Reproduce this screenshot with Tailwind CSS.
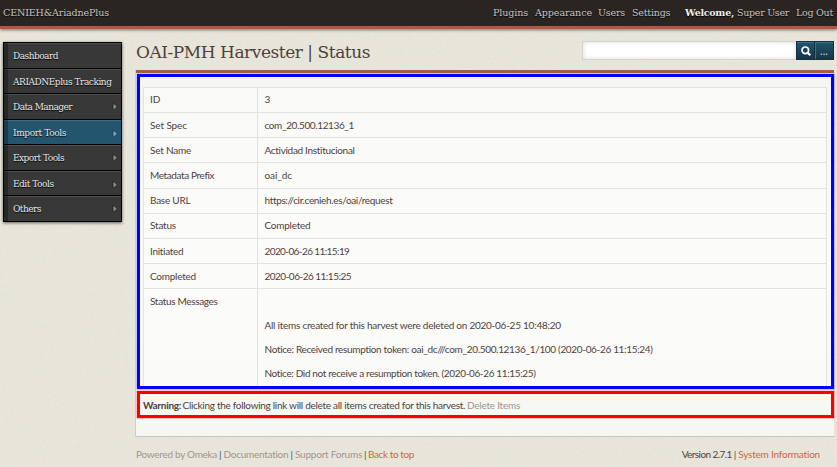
<!DOCTYPE html>
<html lang="en">
<head>
<meta charset="utf-8">
<title>OAI-PMH Harvester | Status</title>
<script src="https://cdn.jsdelivr.net/npm/@tailwindcss/browser@4"></script>
</head>
<body class="relative isolate w-[837px] h-[467px] overflow-hidden bg-[#e9e7db] font-['Lato',sans-serif] text-[10px] leading-[14px] text-[#4f3f3c] whitespace-nowrap">
<svg class="absolute inset-0 -z-10 opacity-[.07]" width="837" height="467"><filter id="paper"><feTurbulence type="fractalNoise" baseFrequency=".35" numOctaves="2"/><feColorMatrix type="saturate" values="0"/></filter><rect width="837" height="467" filter="url(#paper)"/></svg>

<header class="flex h-[29px] items-center justify-between border-b-3 border-[#a65e42] bg-[#2b2521] pl-[3px] font-['DejaVu_Serif',serif] text-[9.5px] text-[#c9c6c3] shadow-[0_1px_3px_rgba(0,0,0,.5)] [text-shadow:0_1px_1px_#000]">
  <a class="tracking-[-0.13px]">CENIEH&amp;AriadnePlus</a>
  <nav class="flex w-[344px]">
    <a class="w-[42px] tracking-[-0.1px]">Plugins</a><a class="w-[63px] tracking-[-0.06px]">Appearance</a><a class="w-[34px] tracking-[-0.18px]">Users</a><a class="w-[53px] tracking-[-0.2px]">Settings</a><b class="w-[52px] tracking-[-0.26px] text-[#f0eeec]">Welcome,</b><a class="w-[59px] tracking-[-0.29px]">Super User</a><a class="w-[37px] tracking-[-0.27px]">Log Out</a>
  </nav>
</header>

<div class="flex">
  <aside class="mt-[13px] ml-[3px] h-[180px] w-[119px] shrink-0 border border-b-0 border-black bg-[#383838] font-['DejaVu_Serif',serif] text-[9px] leading-[24px] text-[#e8e8e8] shadow-[0_1px_3px_rgba(0,0,0,.6)] [text-shadow:0_1px_1px_#000]">
    <a class="flex h-[26px] items-center border-b border-b-black bg-[#383838] pl-[9px] tracking-[-0.51px] shadow-[inset_4px_0_0_rgba(0,0,0,.3),inset_0_1px_0_#505050]">Dashboard</a>
    <a class="flex h-[25px] items-center border-b border-b-black bg-[#383838] pt-[2px] pl-[9px] tracking-[-0.45px] shadow-[inset_4px_0_0_rgba(0,0,0,.3),inset_0_1px_0_#505050]">ARIADNEplus Tracking</a>
    <a class="flex h-[26px] items-center justify-between border-b border-b-black bg-[#383838] pr-[4px] pl-[9px] tracking-[-0.55px] shadow-[inset_4px_0_0_rgba(0,0,0,.3),inset_0_1px_0_#505050]">Data Manager<svg width="5" height="7"><path d="M1 0v7" stroke="#222"/><path d="M1.5 1v5.5l3-2.75z" fill="#929292"/></svg></a>
    <a class="flex h-[25px] items-center justify-between border-b border-b-black bg-[#24556f] pt-[2px] pr-[4px] pl-[9px] tracking-[-0.39px] shadow-[inset_4px_0_0_rgba(0,0,0,.3),inset_0_1px_0_#3d6b83]">Import Tools<svg width="5" height="7"><path d="M1 0v7" stroke="#173b4e"/><path d="M1.5 1v5.5l3-2.75z" fill="#a0a8ac"/></svg></a>
    <a class="flex h-[26px] items-center justify-between border-b border-b-black bg-[#383838] pr-[4px] pl-[9px] tracking-[-0.52px] shadow-[inset_4px_0_0_rgba(0,0,0,.3),inset_0_1px_0_#505050]">Export Tools<svg width="5" height="7"><path d="M1 0v7" stroke="#222"/><path d="M1.5 1v5.5l3-2.75z" fill="#929292"/></svg></a>
    <a class="flex h-[25px] items-center justify-between border-b border-b-black bg-[#383838] pt-[2px] pr-[4px] pl-[9px] tracking-[-0.48px] shadow-[inset_4px_0_0_rgba(0,0,0,.3),inset_0_1px_0_#505050]">Edit Tools<svg width="5" height="7"><path d="M1 0v7" stroke="#222"/><path d="M1.5 1v5.5l3-2.75z" fill="#929292"/></svg></a>
    <a class="flex h-[26px] items-center justify-between border-b border-b-black bg-[#383838] pr-[4px] pl-[9px] tracking-[-0.51px] shadow-[inset_4px_0_0_rgba(0,0,0,.3),inset_0_1px_0_#505050]">Others<svg width="5" height="7"><path d="M1 0v7" stroke="#222"/><path d="M1.5 1v5.5l3-2.75z" fill="#929292"/></svg></a>
  </aside>

  <div class="ml-[14px] w-[698px]">
    <div class="flex h-[41px] items-start justify-between pt-[11px]">
      <h1 class="font-['DejaVu_Serif',serif] text-[17px] leading-6 tracking-[-0.46px]">OAI-PMH Harvester | Status</h1>
      <form class="mt-px flex h-[19px]">
        <div class="w-[214px] border border-r-0 border-[#d4d4cc] bg-white shadow-[inset_0_0_5px_rgba(0,0,0,.14)]"></div>
        <div class="flex w-[19px] items-center justify-center border border-[#14303f] bg-linear-to-b from-[#20546d] to-[#163648] shadow-[inset_0_1px_0_#3f6d84]"><svg class="mt-px" width="10" height="10" fill="none" stroke="#fff"><circle cx="4.3" cy="4.3" r="3.3" stroke-width="1.7"/><path d="M6.7 6.7 9.3 9.3" stroke-width="2"/></svg></div>
        <div class="flex w-[19px] items-center justify-center border border-l-0 border-[#14303f] bg-linear-to-b from-[#20546d] to-[#163648] text-[11px] text-[#c4d2d9] shadow-[inset_1px_1px_0_#3f6d84]">...</div>
      </form>
    </div>

    <main class="relative h-[367px] border-t-3 border-b border-t-[#a65e42] border-b-[#c6c6b8] bg-[#f6f7f2] bg-linear-to-b from-[#f5f6f1] via-[#fbfbf9] to-[#f6f7f2] px-[7px] pt-[14px] shadow-[-1px_0_0_#cfcec2]">
      <div class="grid h-[299px] grid-cols-[114px_1fr] grid-rows-[25px_25px_25px_26px_25px_25px_25px_25px_98px] border-t border-r border-l border-[#e2e3dd] bg-[#fcfcfa]/60 *:border-b *:border-[#e2e3dd] *:pt-[4px] *:odd:pl-[6px] *:even:pl-[6.5px] *:odd:border-r">
        <div>ID</div><div>3</div>
        <div class="tracking-[-0.1px]"><p class="mt-px">Set Spec</p></div><div class="tracking-[-0.38px]"><p class="mt-px">com_20.500.12136_1</p></div>
        <div class="tracking-[-0.22px]"><p class="mt-px">Set Name</p></div><div class="tracking-[-0.31px]"><p class="mt-px">Actividad Institucional</p></div>
        <div class="tracking-[-0.39px]"><p class="mt-px">Metadata Prefix</p></div><div class="tracking-[-0.09px]"><p class="mt-px">oai_dc</p></div>
        <div class="tracking-[-0.25px]">Base URL</div><div class="tracking-[-0.35px]">https://cir.cenieh.es/oai/request</div>
        <div class="tracking-[-0.2px]">Status</div><div class="tracking-[-0.24px]">Completed</div>
        <div class="tracking-[-0.3px]"><p class="mt-px">Initiated</p></div><div class="tracking-[-0.6px]"><p class="mt-px">2020-06-26 11:15:19</p></div>
        <div class="tracking-[-0.24px]"><p class="mt-px">Completed</p></div><div class="tracking-[-0.51px]"><p class="mt-px">2020-06-26 11:15:25</p></div>
        <div class="tracking-[-0.33px]"><p class="mt-px">Status Messages</p></div>
        <div class="flex flex-col gap-[10px]">
          <p class="mt-[25px] tracking-[-0.25px]">All items created for this harvest were deleted on 2020-06-25 10:48:20</p>
          <p class="tracking-[-0.33px]">Notice: Received resumption token: oai_dc///com_20.500.12136_1/100 (2020-06-26 11:15:24)</p>
          <p class="tracking-[-0.36px]">Notice: Did not receive a resumption token. (2020-06-26 11:15:25)</p>
        </div>
      </div>
      <p class="mt-[12px] flex"><b class="w-[39.5px] tracking-[-0.3px]">Warning:</b><span class="w-[284.5px] tracking-[-0.29px]">Clicking the following link will delete all items created for this harvest.</span><a class="tracking-[-0.24px] text-[#a3948f]">Delete Items</a></p>
      <div class="absolute top-px left-px h-[315px] w-[697px] border-3 border-[#0000fb] ring-[0.5px] ring-[#0000fb]/40"></div>
      <div class="absolute top-[318px] left-px h-[27px] w-[697px] border-3 border-[#fb0000] ring-[0.5px] ring-[#fb0000]/40"></div>
    </main>

    <footer class="mt-[10px] flex justify-between pr-[14px] text-[#a3948f]">
      <div class="flex"><a class="w-[83px] tracking-[-0.29px]">Powered by Omeka</a><i class="w-[4.5px] text-[#4f3f3c] not-italic">|</i><a class="w-[67px] tracking-[-0.27px]">Documentation</a><i class="w-[4.5px] text-[#4f3f3c] not-italic">|</i><a class="w-[69px] tracking-[-0.23px]">Support Forums</a><i class="w-[4px] text-[#4f3f3c] not-italic">|</i><a class="tracking-[-0.4px] text-[#c76941]">Back to top</a></div>
      <div class="flex text-[#4f3f3c]"><span class="w-[52px] tracking-[-0.58px]">Version 2.7.1</span><span class="w-[4.5px]">|</span><a class="tracking-[-0.2px] text-[#c76941]">System Information</a></div>
    </footer>
  </div>
</div>
</body>
</html>
